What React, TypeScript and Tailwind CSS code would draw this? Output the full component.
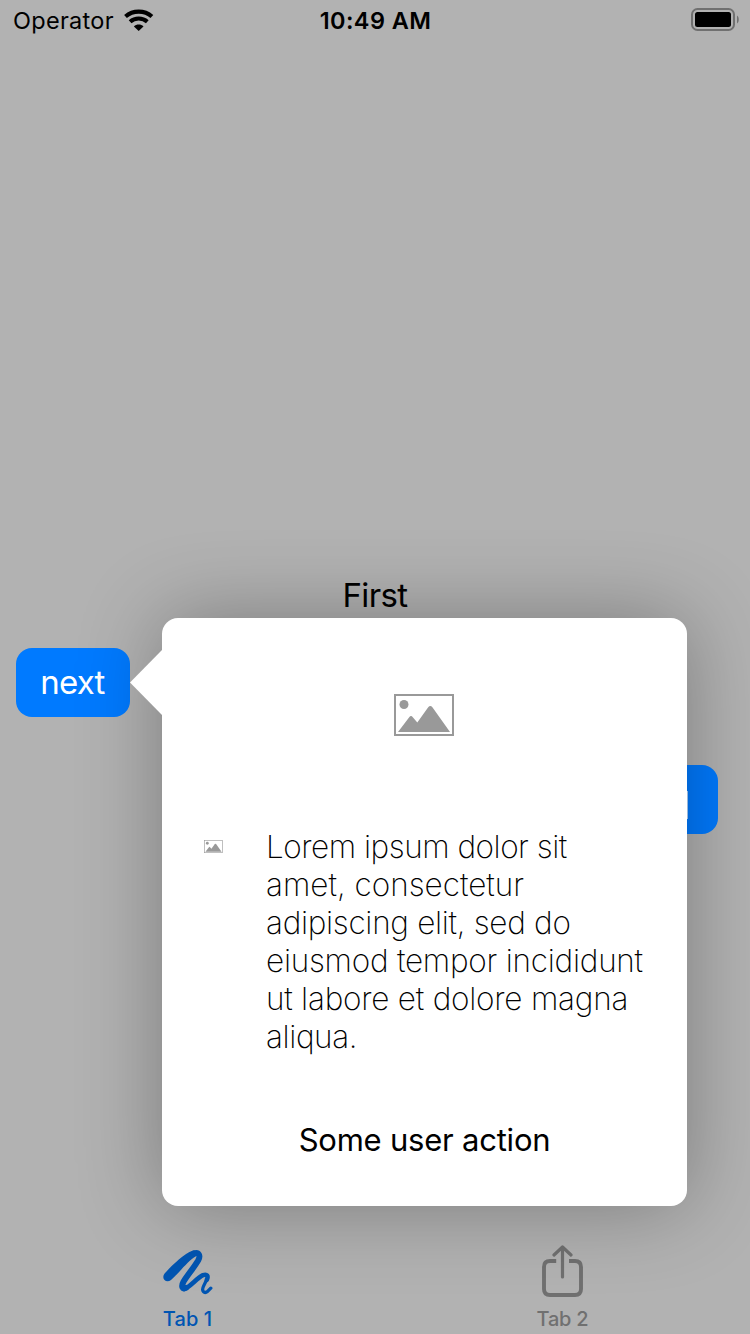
import React from "react";

function WifiIcon() {
  return (
    <svg width="30" height="22" viewBox="0 0 30 22" fill="none">
      <path d="M1.5 7.5C9 0.9 20.4 0.9 27.9 7.5" stroke="black" strokeWidth="4.2" />
      <path d="M6.1 12.7C10.9 8.4 18.5 8.4 23.3 12.7" stroke="black" strokeWidth="4.1" />
      <path d="M9.9 17.4C12.5 14.8 16.9 14.8 19.5 17.4L14.7 21.9Z" fill="black" />
    </svg>
  );
}

function BatteryIcon() {
  return (
    <svg width="48" height="24" viewBox="0 0 48 24" fill="none">
      <rect x="1" y="1" width="42" height="21" rx="5.5" stroke="#707070" strokeWidth="2" />
      <rect x="4" y="4" width="36" height="15" rx="2.5" fill="black" />
      <path d="M46 7.5C48.3 8.8 48.3 14.2 46 15.5Z" fill="#707070" />
    </svg>
  );
}

function PictureIcon({ className }: { className: string }) {
  return (
    <svg className={className} viewBox="0 0 60 42" fill="none">
      <rect x="1" y="1" width="58" height="40" stroke="#999" strokeWidth="2" />
      <circle cx="10" cy="10.5" r="4.5" fill="#999" />
      <path d="M4 38L15.2 23.2Q17 21 18.8 23.2L23.3 28.5L34.2 13.2Q36.3 10.8 38.4 13.2L56 38Z" fill="#999" />
    </svg>
  );
}

function ScribbleIcon() {
  return (
    <svg width="52" height="48" viewBox="0 0 52 48" fill="none" stroke="currentColor" strokeLinecap="round" strokeLinejoin="round">
      <path d="M2.6 26.6C10 18.5 22 6.5 30.5 3.8C35.5 2.5 37 7 33.5 9.6C26 14 17 26 9 33C4 36.8 -1.2 31.2 2.6 26.6Z" fill="currentColor" stroke="none" />
      <path d="M32 6.4C36.8 4.8 38.8 8.4 36.2 13.4C32.8 19.5 25.2 28.5 21.6 34.5C18.8 39.5 20.5 43 24 40.8" strokeWidth="6" />
      <path d="M22.5 41.8C28 40 35 31 41 28.2C45 26.8 46.6 29 44.8 32.8" strokeWidth="4.6" />
      <path d="M45 32L41.8 38.6C38.8 44.5 42.5 47 45.8 44.2L48.8 41.2" strokeWidth="3.3" />
    </svg>
  );
}

const lines = [
  { text: "Lorem ipsum dolor sit", track: "tracking-[-0.48px]" },
  { text: "amet, consectetur", track: "tracking-[0px]" },
  { text: "adipiscing elit, sed do", track: "tracking-[-0.3px]" },
  { text: "eiusmod tempor incididunt", track: "tracking-[-0.25px]" },
  { text: "ut labore et dolore magna", track: "tracking-[-0.23px]" },
  { text: "aliqua.", track: "tracking-[-0.4px]" },
];

function Popover() {
  return (
    <section className="absolute left-[162px] top-[618px] flex h-[588px] w-[525px] flex-col items-center rounded-[16px] bg-white shadow-[0_0_84px_rgba(0,0,0,0.31)]">
      <svg className="absolute -left-8 top-8" width="33" height="65" viewBox="0 0 33 65">
        <path d="M33 0H32L0 32.5L32 65H33Z" fill="white" />
      </svg>
      <PictureIcon className="mr-px mt-[76px] h-[42px] w-[60px]" />
      <div className="mt-[92px] flex w-full pl-[42px]">
        <PictureIcon className="mt-[12px] h-[13px] w-[19px] shrink-0" />
        <p className="ml-[43px] text-[31.5px] font-extralight leading-[38px] text-black">
          {lines.map((line) => (
            <span key={line.text} className={`block whitespace-nowrap ${line.track}`}>
              {line.text}
            </span>
          ))}
        </p>
      </div>
      <button className="mt-[64px] text-[31px] leading-[40px] tracking-[-0.22px] text-black">Some user action</button>
    </section>
  );
}

export default function App() {
  return (
    <div className="relative flex h-[1334px] w-[750px] flex-col overflow-hidden bg-[#b2b2b2] font-['Inter',sans-serif] text-black">
      <header className="grid h-10 grid-cols-3 items-center">
        <div className="flex items-center gap-[10px] pl-[13px]">
          <span className="pt-[2px] text-[23.5px] leading-7 tracking-[0.3px]">Operator</span>
          <WifiIcon />
        </div>
        <span className="pl-px pt-[2px] text-center text-[23.5px] font-semibold leading-7 tracking-[0.4px]">10:49 AM</span>
        <div className="flex justify-end pr-[11px]">
          <BatteryIcon />
        </div>
      </header>

      <main className="flex flex-1 flex-col pt-[535px]">
        <h1 className="text-center text-[33px] leading-[40px] tracking-[-0.6px]">First</h1>
        <button className="ml-4 mt-[33px] h-[69px] w-[114px] rounded-[16px] bg-[#007aff] pr-px text-[33px] leading-[69px] tracking-[-0.8px] text-white">
          next
        </button>
        <div className="mr-8 mt-12 flex h-[69px] w-12 items-center self-end rounded-[16px] bg-[#007aff] pl-[17px]">
          <span className="mt-[11px] h-7 w-px bg-white/70" />
        </div>
      </main>

      <nav className="grid h-[98px] grid-cols-2 text-[20px] font-medium leading-6">
        <div className="flex flex-col items-center pt-[11px] text-[#0055b2]">
          <ScribbleIcon />
          <span className="mt-[12px] tracking-[0.1px]">Tab 1</span>
        </div>
        <div className="flex flex-col items-center pt-[9px] text-[#707070]">
          <svg width="42" height="52" viewBox="0 0 42 52" fill="none" stroke="currentColor" strokeLinecap="round" strokeLinejoin="round">
            <path d="M14.2 16H8Q2 16 2 22V44Q2 50 8 50H33Q39 50 39 44V22Q39 16 33 16H27" strokeWidth="3.9" strokeLinecap="butt" />
            <path d="M20.5 32V2M12 10L20.5 2L29 10" strokeWidth="3.2" />
          </svg>
          <span className="mt-[10px] tracking-[-0.2px]">Tab 2</span>
        </div>
      </nav>
      <Popover />
    </div>
  );
}
